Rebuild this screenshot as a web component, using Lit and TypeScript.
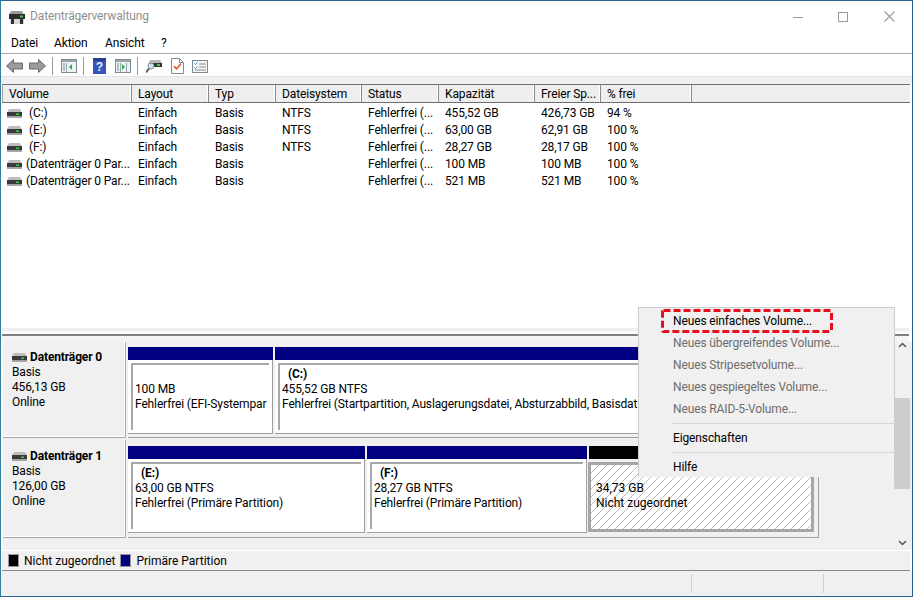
import { LitElement, html, css, svg } from "lit";
import { customElement } from "lit/decorators.js";

const disk = () => html`<svg class="dk" width="15" height="9" viewBox="0 0 15 9"><path d="M2 0h11l2 3.500H0z" fill="#bdbdbd"/><rect x="0" y="3" width="15" height="4.500" fill="#3a3a3a"/><rect x="0" y="7.500" width="15" height="1.500" fill="#a8a8a8"/><rect x="9" y="4.500" width="3" height="1.500" fill="#34d048"/></svg>`;

const cols = [
  ["Volume", 129], ["Layout", 77], ["Typ", 67], ["Dateisystem", 86], ["Status", 77], ["Kapazität", 96], ["Freier Sp...", 66], ["% frei", 91],
] as const;
const rows = [
  ["(C:)", "Einfach", "Basis", "NTFS", "Fehlerfrei (...", "455,52 GB", "426,73 GB", "94 %"],
  ["(E:)", "Einfach", "Basis", "NTFS", "Fehlerfrei (...", "63,00 GB", "62,91 GB", "100 %"],
  ["(F:)", "Einfach", "Basis", "NTFS", "Fehlerfrei (...", "28,27 GB", "28,17 GB", "100 %"],
  ["(Datenträger 0 Par...", "Einfach", "Basis", "", "Fehlerfrei (...", "100 MB", "100 MB", "100 %"],
  ["(Datenträger 0 Par...", "Einfach", "Basis", "", "Fehlerfrei (...", "521 MB", "521 MB", "100 %"],
];

const winIcon = (arrow: any) => html`<svg width="16" height="14" viewBox="0 0 16 14"><rect x=".5" y=".5" width="15" height="13" fill="#eef2f4" stroke="#7c8a94"/><rect x="1" y="1" width="14" height="2" fill="#9aa6ae"/><path d="M5.5 4v9" stroke="#9aa6ae"/><path d="M2 5h2M2 7h2M2 9h2M2 11h2" stroke="#7c8a94"/>${arrow}</svg>`;

@customElement("app-root")
export class AppRoot extends LitElement {
  static styles = css`
    :host { display: block; width: 913px; height: 597px; font: 12px/17px Roboto, "Open Sans", "Liberation Sans", sans-serif; letter-spacing: -0.13px; color: #000; overflow: hidden; }
    .win { position: relative; box-sizing: border-box; width: 913px; height: 597px; display: flex; flex-direction: column; background: #fff; border: 1px solid #2a6596; border-left-color: #2f7f9e; border-right-color: #2a5f92; }
    .title { height: 31px; display: flex; align-items: center; flex: none; }
    .title .ico { margin: 0 0 0 8px; }
    .title span { margin-left: 5px; color: #8f8f8f; font-size: 12px; }
    .caps { margin-left: auto; display: flex; align-items: center; padding-right: 17px; }
    .caps svg { display: block; }
    .menu { flex: none; display: flex; align-items: center; padding: 2px 0 0 10px; box-sizing: content-box; height: 19px; border-bottom: 1px solid #a9a9b3; }
    .menu span { flex: none; }
    .tb { height: 22px; flex: none; display: flex; align-items: center; padding: 2px 0 0 5px; box-sizing: border-box; }
    .tb svg { display: block; flex: none; }
    .sep { width: 1px; height: 18px; background: #9a9a9a; flex: none; }
    .band { height: 7px; flex: none; background: #f0f0f0; border-top: 1px solid #e3e3e3; }
    .list { height: 244px; flex: none; margin: 0 2px 0 1px; display: flex; flex-direction: column; background: #fff; }
    .hd { display: flex; height: 19px; flex: none; background: #eeeeee; border-top: 1px solid #6e6e6e; border-bottom: 1px solid #6e6e6e; border-left: 1px solid #a0a0a0; box-sizing: border-box; }
    .hd div { box-sizing: border-box; padding: 2px 0 0 6px; line-height: 15px; border-right: 1px solid #8a8a8a; box-shadow: inset -1px 0 0 #fff; flex: none; }
    .tr { display: flex; height: 17px; flex: none; }
    .body { padding-top: 2px; }
    .tr div { box-sizing: border-box; padding-left: 6px; flex: none; white-space: nowrap; overflow: hidden; }
    .tr .v { display: flex; align-items: center; padding-left: 5px; gap: 7px; }
    .tr .v.l { gap: 4px; }
    .split { height: 14px; flex: none; margin: 0 3px 0 1px; background: linear-gradient(#f0f0f0 0 3px, #fbfbfb 3px 6px, #808080 6px 8px, #f4f4f4 8px); }
    .graph { height: 208px; flex: none; display: flex; background: #f0f0f0; margin-left: 2px; }
    .disks { width: 891px; flex: none; }
    .sb { width: 16px; flex: none; display: flex; flex-direction: column; align-items: center; justify-content: space-between; background: #f0f0f0; position: relative; padding: 0 0 4px; box-sizing: border-box; height: 208px; }
    .thumb { position: absolute; left: 0; top: 56px; width: 16px; height: 91px; background: #cdcdcd; }
    .disk { display: flex; height: 96px; box-sizing: border-box; }
    .disk + .disk { margin-top: 2px; height: 98px; }
    .info { width: 123px; flex: none; background: #f0f0f0; border-right: 1px solid #a8a8a8; border-bottom: 1px solid #a8a8a8; box-shadow: inset -1px -1px 0 #fff; padding: 7px 0 0 9px; box-sizing: border-box; line-height: 15px; }
    .disk + .disk .info { padding-top: 8px; }
    .info b { display: flex; align-items: center; gap: 3px; font-size: 12px; line-height: 17px; margin-bottom: -1px; }
    .parts { display: flex; width: 691px; flex: none; margin-left: 2px; border-right: 1px solid #a0a0a0; border-bottom: 1px solid #a0a0a0; box-sizing: border-box; padding-top: 5px; background: #f0f0f0; }
    .disk + .disk .parts { padding-top: 6px; }
    .p { flex: none; box-sizing: border-box; display: flex; flex-direction: column; margin-right: 2px; }
    .p.last { margin-right: 0; }
    .bar { height: 13px; flex: none; background: #000080; }
    .bar.k { background: #000; }
    .pb { flex: none; height: 74px; background: #fff; padding: 3px; box-sizing: border-box; border-right: 1px solid #a0a0a0; border-bottom: 1px solid #a0a0a0; }
    .box { height: 100%; box-sizing: border-box; border-top: 2px solid #a8a8a8; border-left: 2px solid #a8a8a8; padding: 2px 0 0 2px; background: #fff; white-space: nowrap; overflow: hidden; line-height: 15px; }
    .box .nm { font-weight: 700; padding-left: 6px; height: 15px; }
    .hatch { margin: 3px 0 0 -1px; height: 70px; box-sizing: border-box; border: 3px solid #a6a6a6; padding: 16px 0 0 5px; line-height: 15px; letter-spacing: 0; background: repeating-linear-gradient(135deg, #fff 0 4.95px, #bcbcbc 4.95px 5.66px); }
    .hatch span { display: block; }
    .legend { height: 21px; flex: none; margin: 0 2px 0 1px; display: flex; align-items: center; padding: 1px 0 0 6px; letter-spacing: 0; background: #f0f0f0; border-top: 1px solid #fff; border-bottom: 1px solid #888; box-sizing: border-box; }
    .sw { width: 9px; height: 11px; background: #000; border: 1px solid #999; margin: -1px 5px 0 0; flex: none; }
    .sw.n { background: #000080; margin-left: 5px; }
    .status { flex: 1; display: flex; background: #f0f0f0; }
    .status div { border-left: 1px solid #d0d0d0; margin: 3px 0; }
    .status .a { margin-left: 690px; width: 131px; }
    .status .b { flex: 1; }
    .cm { position: absolute; left: 637px; top: 306px; width: 257px; height: 170px; background: #f0f0f0; border: 1px solid #cccccc; border-bottom: 0; box-sizing: border-box; display: flex; flex-direction: column; padding: 2px 0 0 34px; }
    .cm .it { height: 22px; line-height: 22px; flex: none; color: #000; }
    .cm .dis { color: #6d6d6d; }
    .cm hr { border: 0; height: 1px; background: #d7d7d7; margin: 3px 2px 3px -1px; flex: none; width: 223px; }
    .mark { position: absolute; left: 22px; top: 1px; display: block; }
  `;

  part(w: number, nm: string, l1: string, l2: string) {
    return html`<div class="p" style="width:${w}px">
      <div class="bar"></div>
      <div class="pb"><div class="box"><div class="nm">${nm}</div><div>${l1}</div><div>${l2}</div></div></div>
    </div>`;
  }

  render() {
    return html`<div class="win">
      <div class="title">
        <svg class="ico" width="16" height="16" viewBox="0 0 16 16"><path d="M2 2h11l2 4H0z" fill="#9a9a9a"/><rect x="0" y="5" width="16" height="5" fill="#2c2c2c"/><rect x="11" y="6.500" width="3" height="2" fill="#3ad050"/><rect x="1" y="10" width="14" height="5" fill="#d8d8d8"/><rect x="2" y="10" width="3" height="5" fill="#333"/><rect x="11" y="10" width="3" height="5" fill="#333"/></svg>
        <span>Datenträgerverwaltung</span>
        <div class="caps">
          <svg width="10" height="10" viewBox="0 0 10 10"><path d="M0 5.500h10" stroke="#999"/></svg>
          <svg style="margin-left:35px" width="10" height="10" viewBox="0 0 10 10"><rect x=".5" y=".5" width="9" height="9" fill="none" stroke="#999"/></svg>
          <svg style="margin-left:36px" width="11" height="11" viewBox="0 0 11 11"><path d="M.5.500l10 10M10.500.500l-10 10" stroke="#999" stroke-width="1.100"/></svg>
        </div>
      </div>
      <div class="menu"><span style="width:43px">Datei</span><span style="width:51px">Aktion</span><span style="width:56px">Ansicht</span><span>?</span></div>
      <div class="tb">
        <svg width="17" height="14" viewBox="0 0 17 14"><path d="M.5 7L7.500.5V4h9v6h-9v3.500z" fill="#9b9b9b" stroke="#6a6a6a"/></svg>
        <svg style="margin-left:6px" width="17" height="14" viewBox="0 0 17 14"><path d="M16.500 7L9.500.5V4h-9v6h9v3.500z" fill="#9b9b9b" stroke="#6a6a6a"/></svg>
        <div class="sep" style="margin-left:6px"></div>
        <span style="margin-left:8px;display:flex">${winIcon(svg`<path d="M8 8l3-3v6z" fill="#2fae4e"/>`)}</span>
        <div class="sep" style="margin-left:6px"></div>
        <svg style="margin-left:9px" width="13" height="16" viewBox="0 0 13 16"><rect width="13" height="16" fill="#3556b8"/><rect x="0" y="0" width="13" height="3" fill="#27408f"/><text x="6.500" y="13" text-anchor="middle" font-family="Liberation Sans" font-size="12" font-weight="700" letter-spacing="0" fill="#e8ecff">?</text></svg>
        <span style="margin-left:9px;display:flex">${winIcon(svg`<path d="M7 5l3 3-3 3z" fill="#2fae4e"/><path d="M11.500 4v9" stroke="#9aa6ae"/>`)}</span>
        <div class="sep" style="margin-left:6px"></div>
        <svg style="margin-left:8px" width="16" height="15" viewBox="0 0 16 15"><path d="M4 1h10l2 3v2H2z" fill="#b8b8b8"/><rect x="5" y="4" width="11" height="4" fill="#333"/><rect x="11" y="5" width="3" height="2" fill="#3ad050"/><circle cx="5" cy="7" r="3" fill="#cfe3ee" stroke="#7d8a92"/><path d="M3 9.500l-3 4" stroke="#5d5d5d" stroke-width="2"/></svg>
        <svg style="margin-left:9px" width="13" height="16" viewBox="0 0 13 16"><path d="M.5.500h8l4 4v11H.5z" fill="#fff" stroke="#8a8a8a"/><path d="M8.500.5v4h4" fill="none" stroke="#8a8a8a"/><path d="M3 8l2.500 3L10 5.500" fill="none" stroke="#e05a28" stroke-width="1.600"/></svg>
        <svg style="margin-left:8px" width="16" height="13" viewBox="0 0 16 13"><rect x=".5" y=".5" width="15" height="12" fill="#f4f6f8" stroke="#808a90"/><path d="M2.500 3.500l1 1 2-2M2.500 7.500l1 1 2-2" fill="none" stroke="#3b8fd0"/><path d="M7 4h7M7 7h7M3 10h11" stroke="#8a8a8a"/></svg>
      </div>
      <div class="band"></div>
      <div class="list">
        <div class="hd">${cols.map(([n, w]) => html`<div style="width:${w}px">${n}</div>`)}</div>
        <div class="body">
          ${rows.map((r) => html`<div class="tr">${r.map((c, i) =>
            i === 0
              ? html`<div class="v ${c.length > 5 ? "l" : ""}" style="width:${cols[0][1] + 1}px">${disk()}<span>${c}</span></div>`
              : html`<div style="width:${cols[i][1]}px">${c}</div>`)}</div>`)}
        </div>
      </div>
      <div class="split"></div>
      <div class="graph">
        <div class="disks">
          <div class="disk">
            <div class="info"><b>${disk()}Datenträger 0</b>Basis<br />456,13 GB<br />Online</div>
            <div class="parts">
              ${this.part(145, "", "100 MB", "Fehlerfrei (EFI-Systempar")}
              ${this.part(544, "(C:)", "455,52 GB NTFS", "Fehlerfrei (Startpartition, Auslagerungsdatei, Absturzabbild, Basisdat")}
            </div>
          </div>
          <div class="disk">
            <div class="info"><b>${disk()}Datenträger 1</b>Basis<br />126,00 GB<br />Online</div>
            <div class="parts">
              ${this.part(237, "(E:)", "63,00 GB NTFS", "Fehlerfrei (Primäre Partition)")}
              ${this.part(220, "(F:)", "28,27 GB NTFS", "Fehlerfrei (Primäre Partition)")}
              <div class="p last" style="width:225px">
                <div class="bar k"></div>
                <div class="hatch"><span>34,73 GB</span><span>Nicht zugeordnet</span></div>
              </div>
            </div>
          </div>
        </div>
        <div class="sb">
          <svg width="9" height="6" viewBox="0 0 9 6"><path d="M1 5l3.500-3.500L8 5" fill="none" stroke="#555" stroke-width="1.500"/></svg>
          <div class="thumb"></div>
          <svg width="9" height="6" viewBox="0 0 9 6"><path d="M1 1l3.500 3.500L8 1" fill="none" stroke="#555" stroke-width="1.500"/></svg>
        </div>
      </div>
      <div class="legend"><div class="sw"></div>Nicht zugeordnet<div class="sw n"></div>Primäre Partition</div>
      <div class="status"><div class="a"></div><div class="b"></div></div>
      <div class="cm">
        <svg class="mark" width="172" height="24" viewBox="0 0 172 24"><rect x="1.500" y="1.500" width="169" height="21" rx="1" fill="none" stroke="#e60f1e" stroke-width="3" stroke-dasharray="7 3"/></svg>
        <div class="it">Neues einfaches Volume...</div>
        <div class="it dis">Neues übergreifendes Volume...</div>
        <div class="it dis">Neues Stripesetvolume...</div>
        <div class="it dis">Neues gespiegeltes Volume...</div>
        <div class="it dis">Neues RAID-5-Volume...</div>
        <hr />
        <div class="it">Eigenschaften</div>
        <hr />
        <div class="it">Hilfe</div>
      </div>
    </div>`;
  }
}
